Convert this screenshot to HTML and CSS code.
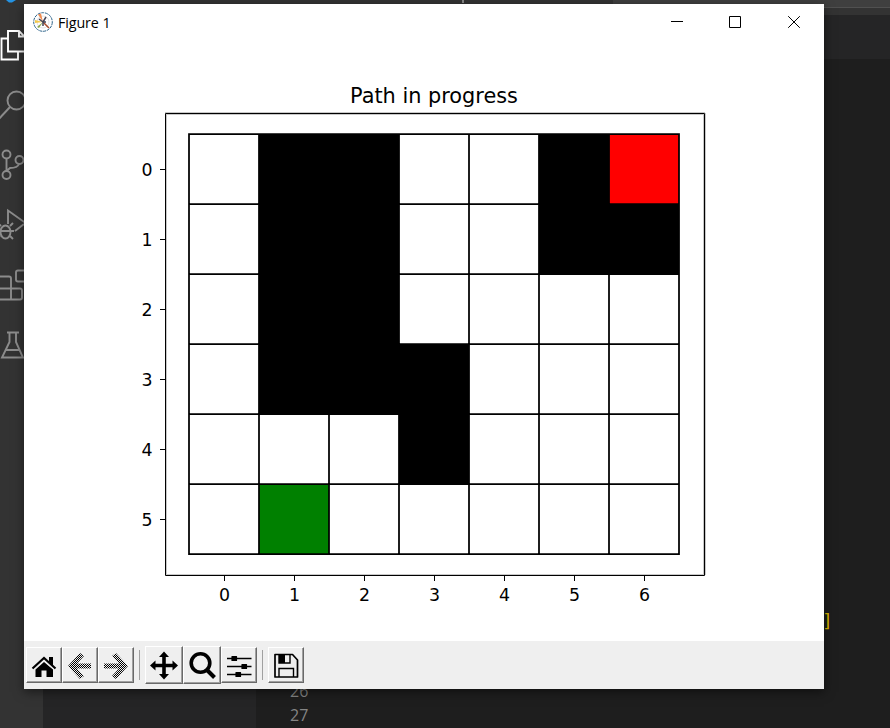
FILE: index.html
```
<!DOCTYPE html>
<html lang="en">
<head>
<meta charset="utf-8">
<title>Figure 1</title>
<link rel="stylesheet" href="styles.css">
</head>
<body>
<div class="editor">
  <header class="menubar">
    <svg width="20" height="4" viewBox="0 0 20 4"><path d="M6 0h10l-4 2.500h-3z" fill="#2493e3"/></svg>
    <i class="tick"></i>
    <i class="drag"></i>
  </header>
  <div class="workspace">
    <nav class="activity">
      <svg class="active" viewBox="0 0 24 60"><path d="M8 23h11l6 6v14.500H8zM19 23v5.500h6M8 30.500H1.500v21h16.500v-7"/></svg>
      <svg viewBox="0 0 24 60"><circle cx="16.500" cy="32.500" r="9"/><path d="M10 39L-3 53"/></svg>
      <svg viewBox="0 0 24 60"><circle cx="6.500" cy="26.500" r="4"/><circle cx="6.500" cy="47" r="4"/><circle cx="19.500" cy="32" r="4"/><path d="M6.500 30.500v12.500M19 36c-1 3-4 4-9 4l-3.500 3"/></svg>
      <svg viewBox="0 0 24 60"><path d="M8 36V22.500l17 12M24 36l-9 7M-1 43h12M1 38l-3-3M10 38l3-3M0 48l-3 3M10 48l3 3M11 43h3"/><ellipse cx="5.500" cy="44" rx="5" ry="6.500"/></svg>
      <svg viewBox="0 0 24 60"><path d="M28 22.500H18q-2 0-2 2v7q0 2 2 2h10M-2 28.500H9q2 0 2 2V51M-2 40.500H20q2 0 2 2v7q0 2-2 2H-2"/></svg>
      <svg viewBox="0 0 24 60"><path d="M7 24.500h12M9.500 25v9L2 49.500h21L16 34v-9M6 42h13"/></svg>
    </nav>
    <aside class="sidebar"></aside>
    <main class="code">
      <div class="tabs"></div>
      <div class="crumbs"></div>
      <div class="lines">
        <span class="bracket">]</span>
        <span class="num">26</span>
        <span class="num">27</span>
      </div>
    </main>
  </div>
</div>

<section class="window">
  <header class="titlebar">
    <svg class="logo" width="20" height="20" viewBox="0 0 20 20">
      <circle cx="10" cy="10" r="9.300" fill="#fff" stroke="#2b6289" stroke-width="1" stroke-dasharray="3 .8"/>
      <circle cx="10" cy="10" r="6" fill="none" stroke="#ccc" stroke-width=".6"/>
      <path d="M10 10L5 2.500l3-1z" fill="#ef8b50"/>
      <path d="M10 10L2 11V8z" fill="#f2c84b"/>
      <path d="M10 10L4 15l2 1z" fill="#8aa64b"/>
      <path d="M10 10l6 6" stroke="#a64b2a" stroke-width="1.500"/>
      <path d="M10 10l3-5M10 10l-4-3M10 10v4M10 10h3" stroke="#445" stroke-width="1.500"/>
    </svg>
    <h1>Figure 1</h1>
    <div class="controls">
      <svg viewBox="0 0 12 12"><path d="M0 5.500h12"/></svg>
      <svg viewBox="0 0 12 12"><path d="M.5.500h11v11H.5z"/></svg>
      <svg viewBox="0 0 12 12"><path d="M.2.200l11.600 11.600M11.800.200L.2 11.800"/></svg>
    </div>
  </header>

  <svg class="plot" width="800" height="600" viewBox="24 41 800 600">
    <text class="title" x="434" y="103">Path in progress</text>
    <path class="halo" d="M165 112.500h540M165 114.500h540M166.500 113v462M703.500 113v462M705.500 113v462M165 574.500h540"/>
    <path class="axes" d="M165.500 113.500h539v462h-539z"/>
    <path class="axes" d="M160 169.500h5M160 239.500h5M160 309.500h5M160 379.500h5M160 449.500h5M160 519.500h5M224.500 576v5M294.500 576v5M364.500 576v5M434.500 576v5M504.500 576v5M574.500 576v5M644.500 576v5"/>
    <path class="wall" d="M259 134h140v210h70v140h-70v-70H259zM539 134h70v70h70v70H539z"/>
    <path class="goal" d="M609 134h70v70h-70z"/>
    <path class="start" d="M259 484h70v70h-70z"/>
    <path class="grid" d="M189 134h490v420H189zM189 204h490M189 274h490M189 344h490M189 414h490M189 484h490M259 134v420M329 134v420M399 134v420M469 134v420M539 134v420M609 134v420"/>
    <g class="ylabels">
      <text x="152.500" y="176">0</text><text x="152.500" y="246">1</text><text x="152.500" y="316">2</text>
      <text x="152.500" y="386">3</text><text x="152.500" y="456">4</text><text x="152.500" y="526">5</text>
    </g>
    <g class="xlabels">
      <text x="224.500" y="601">0</text><text x="294.500" y="601">1</text><text x="364.500" y="601">2</text>
      <text x="434.500" y="601">3</text><text x="504.500" y="601">4</text><text x="574.500" y="601">5</text><text x="644.500" y="601">6</text>
    </g>
  </svg>

  <footer class="toolbar">
    <button aria-label="Home"><svg viewBox="0 0 26 26"><path d="M13 10L4.500 17.500V25H10.500v-6.500h5V25H22v-7.500zM18 5h4v9l-4-3.500z"/><path d="M1.500 16.500L13 6l11.500 10.500" fill="none" stroke="#000" stroke-width="2.200"/><path d="M3 17.800L13 8.700l10 9.100" fill="none" stroke="#efefef" stroke-width=".9"/></svg></button>
    <button aria-label="Back"><svg viewBox="0 0 26 26"><defs><pattern id="dither" width="2" height="2" patternUnits="userSpaceOnUse"><path d="M0 0h1v1H0zM1 1h1v1H1z"/></pattern></defs><path fill="url(#dither)" d="M1 14L13 1l4 3-7 7.500h14v5H10l7 7.500-4 3z"/></svg></button>
    <button aria-label="Forward"><svg viewBox="0 0 26 26"><path fill="url(#dither)" d="M25 14L13 1l-4 3 7 7.500H1v5h15L9 24l4 3z"/></svg></button>
    <i class="divider"></i>
    <button class="large" aria-label="Pan"><svg viewBox="0 0 28 28"><path d="M14 .5l5 5.500h-3.200v6.700h6.700V9.500l5.500 5-5.500 5v-3.200h-6.700V23H19l-5 5.500L9 23h3.200v-6.700H5.500v3.200l-5.500-5 5.500-5v3.200h6.700V6H9z"/></svg></button>
    <button class="large" aria-label="Zoom"><svg viewBox="0 0 28 28"><circle cx="12.500" cy="12" r="9.300" fill="none" stroke="#000" stroke-width="3.600"/><path d="M19 19l7.500 7.500" stroke="#000" stroke-width="4"/></svg></button>
    <button aria-label="Configure subplots"><svg viewBox="0 0 26 26"><path d="M1 6.500h24.500M1 14.500h24.500M1 22.500h24.500" stroke="#000" stroke-width="1.500"/><path d="M6 4.500h4.500v4H6zM16 12.500h4.500v4H16zM10 20.500h4.500v4H10z" stroke="#000" stroke-width="1.200" stroke-linejoin="round"/></svg></button>
    <i class="divider"></i>
    <button aria-label="Save"><svg viewBox="0 0 26 26"><path d="M2 2.500h17.500l5 5.500v17H2z" fill="none" stroke="#000" stroke-width="1.700" stroke-linejoin="round"/><path d="M6 2.500V11h11V2.500M6 25v-8.500h14.500V25" fill="none" stroke="#000" stroke-width="1.400"/><path d="M6 2.500h6V11H6z"/></svg></button>
  </footer>
</section>
</body>
</html>
```
FILE: styles.css
```
* { box-sizing: border-box; }
body {
  margin: 0;
  width: 890px;
  height: 728px;
  overflow: hidden;
  background: #1e1e1e;
  font-family: "Open Sans", sans-serif;
}
.editor { display: flex; flex-direction: column; height: 728px; }
.menubar {
  height: 8px;
  flex: none;
  display: flex;
  background: #333;
  border-bottom: 1px solid #505050;
}
.tick { width: 2px; height: 3px; margin-left: 442px; background: #888; }
.drag { flex: 1; margin-left: 149px; background: #3f3f3f; }
.workspace { display: flex; flex: 1; }
.activity {
  width: 43px;
  margin-top: -1px;
  padding-top: 1px;
  background: #333;
  display: flex;
  flex-direction: column;
}
.activity svg {
  width: 24px;
  height: 60px;
  flex: none;
  fill: none;
  stroke: #8c8c8c;
  stroke-width: 1.9;
}
.activity svg.active { stroke: #fff; }
.sidebar { width: 213px; background: #252526; }
.code { flex: 1; display: flex; flex-direction: column; }
.tabs { height: 7px; background: #333; }
.crumbs { height: 44px; background: #252526; }
.lines {
  flex: 1;
  display: flex;
  flex-direction: column;
  justify-content: flex-end;
  padding: 0 0 1px 34px;
  font: 16px/24px "Open Sans", sans-serif;
  color: #858585;
}
.bracket {
  margin: 0 0 46px 532px;
  font: 18px/24px "DejaVu Sans Mono", monospace;
  color: #dcb800;
}
.window {
  position: absolute;
  left: 24px;
  top: 4px;
  width: 800px;
  height: 685px;
  background: #fff;
  box-shadow: 0 3px 10px rgba(0, 0, 0, .5);
}
.titlebar {
  height: 37px;
  display: flex;
  align-items: center;
  padding: 0 24px 1px 9px;
}
.logo { margin-right: 5px; }
h1 { margin: 0; font-size: 14.3px; font-weight: 400; letter-spacing: -.1px; }
.controls { display: flex; gap: 47px; margin-left: auto; }
.controls svg { width: 12px; height: 12px; fill: none; stroke: #000; }
.controls svg:first-child { margin-right: -1px; }
.plot { display: block; height: 600px; font-family: "DejaVu Sans", sans-serif; }
.title { font-size: 20.83px; text-anchor: middle; }
.halo { stroke: #c8c8c8; }
.axes { fill: none; stroke: #000; }
.grid { fill: none; stroke: #000; stroke-width: 1.75; }
.goal { fill: #f00; }
.start { fill: #008000; }
.xlabels, .ylabels { font-size: 17.36px; }
.xlabels { text-anchor: middle; }
.ylabels { text-anchor: end; }
.toolbar {
  height: 48px;
  display: flex;
  align-items: center;
  background: #efefef;
  padding-left: 2px;
}
button {
  width: 36px;
  height: 36px;
  padding: 0;
  display: flex;
  align-items: center;
  justify-content: center;
  background: #efefef;
  border: 1px solid;
  border-color: #fff #696969 #696969 #fff;
  box-shadow: inset -1px -1px #a0a0a0;
}
button svg { width: 26px; height: 26px; overflow: visible; }
.large { width: 38px; height: 38px; }
.large svg { width: 28px; height: 28px; }
.divider { width: 1px; height: 30px; margin: 0 5px; background: #a0a0a0; }
```
